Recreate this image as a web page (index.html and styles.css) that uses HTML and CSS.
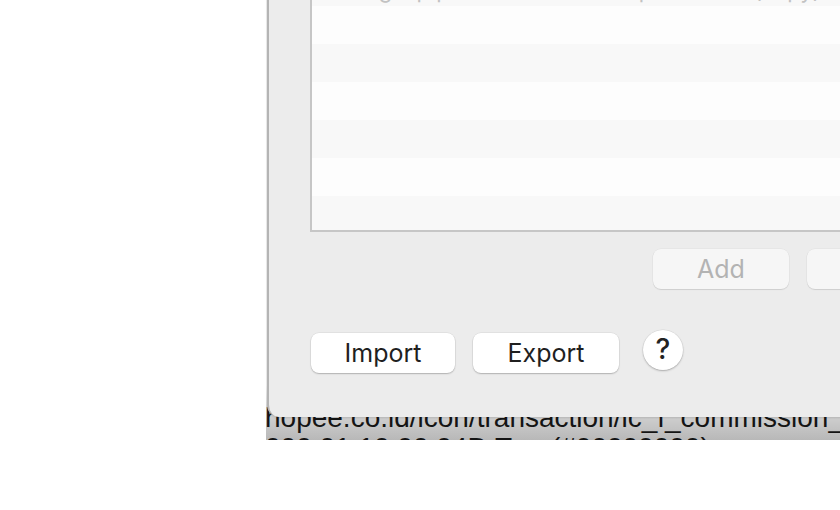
FILE: index.html
```html
<!DOCTYPE html>
<html>
<head>
<meta charset="utf-8">
<link rel="stylesheet" href="styles.css">
</head>
<body>
<div class="backdrop">
  <div class="backdrop-text">
    <div class="line">hopee.co.id/icon/transaction/ic_f_commission_</div>
    <div class="line second">000 01 10 00 04D T&nbsp;&nbsp;&nbsp;&nbsp;&nbsp;(#00000000)</div>
  </div>
</div>

<div class="dialog">
  <div class="table">
    <div class="row alt"><span class="cell c1">Regexp pattern</span><span class="cell c2">Replacement (copy)</span></div>
    <div class="row"></div>
    <div class="row alt"></div>
    <div class="row"></div>
    <div class="row alt"></div>
    <div class="row"></div>
    <div class="row alt"></div>
  </div>

  <div class="edit-row">
    <button class="btn disabled w136">Add</button>
    <button class="btn disabled w136">Edit</button>
  </div>

  <div class="bottom-row">
    <button class="btn w144">Import</button>
    <button class="btn w146">Export</button>
    <button class="help">?</button>
  </div>
</div>
</body>
</html>
```

FILE: styles.css
```css
html, body {
  margin: 0;
  padding: 0;
}
body {
  width: 840px;
  height: 510px;
  background: #ffffff;
  position: relative;
  overflow: hidden;
  font-family: Inter, "Noto Sans", sans-serif;
}

.backdrop {
  position: absolute;
  left: 266px;
  top: 0;
  width: 574px;
  height: 440px;
  overflow: hidden;
  background: linear-gradient(to bottom, #efefef 0, #efefef 385px, #dadada 405px, #b8b8b8 440px);
}
.backdrop-text {
  padding-top: 402px;
  font-family: "Liberation Sans", Arial, sans-serif;
  font-size: 28px;
  line-height: 32px;
  color: #141414;
  white-space: nowrap;
  margin-left: -1px;
}
.backdrop-text .second {
  margin-top: -2px;
}

.dialog {
  position: absolute;
  left: 267px;
  top: -32px;
  width: 717px;
  background: #ececec;
  border-left: 2px solid #b4b4b4;
  border-bottom-left-radius: 12px;
  box-shadow: 0 1px 2px rgba(0, 0, 0, 0.12);
  padding: 0 41px 44px 41px;
  box-sizing: border-box;
  display: flex;
  flex-direction: column;
}

.table {
  height: 262px;
  overflow: hidden;
  border-left: 2px solid #c6c6c6;
  border-bottom: 2px solid #c6c6c6;
  background: #fdfdfd;
}
.row {
  height: 38px;
  background: #fdfdfd;
  display: flex;
  align-items: center;
  font-size: 22px;
  color: #c2c2c2;
  white-space: nowrap;
}
.row.alt {
  background: #f8f8f8;
}
.cell {
  padding-top: 6px;
}
.c1 {
  margin-left: 40px;
  width: 260px;
}

.edit-row {
  margin-top: 17px;
  display: flex;
  justify-content: flex-end;
  gap: 18px;
}

.bottom-row {
  margin-top: 41px;
  padding-left: 1px;
  display: flex;
  align-items: flex-start;
}
.bottom-row .btn {
  margin-top: 3px;
}
.bottom-row .btn + .btn {
  margin-left: 18px;
}

.btn {
  height: 40px;
  border: none;
  border-radius: 8px;
  background: #ffffff;
  box-shadow: 0 0 0 0.5px rgba(0, 0, 0, 0.08), 0 1px 1.5px rgba(0, 0, 0, 0.22);
  font-family: Inter, "Noto Sans", sans-serif;
  font-size: 25px;
  color: #1f1f1f;
  padding: 0;
  display: flex;
  align-items: center;
  justify-content: center;
}
.btn.disabled {
  background: #f6f6f6;
  color: #b3b3b3;
  box-shadow: 0 0 0 0.5px rgba(0, 0, 0, 0.05), 0 1px 1px rgba(0, 0, 0, 0.1);
}
.w136 { width: 136px; }
.w144 { width: 144px; }
.w146 { width: 146px; }

.help {
  margin-left: 24px;
  width: 40px;
  height: 40px;
  border-radius: 50%;
  border: none;
  background: #ffffff;
  box-shadow: 0 0 0 0.5px rgba(0, 0, 0, 0.08), 0 1px 2px rgba(0, 0, 0, 0.25);
  font-family: Inter, "Noto Sans", sans-serif;
  font-size: 28px;
  font-weight: 500;
  color: #222222;
  padding: 0 0 2px 0;
  display: flex;
  align-items: center;
  justify-content: center;
}
```
